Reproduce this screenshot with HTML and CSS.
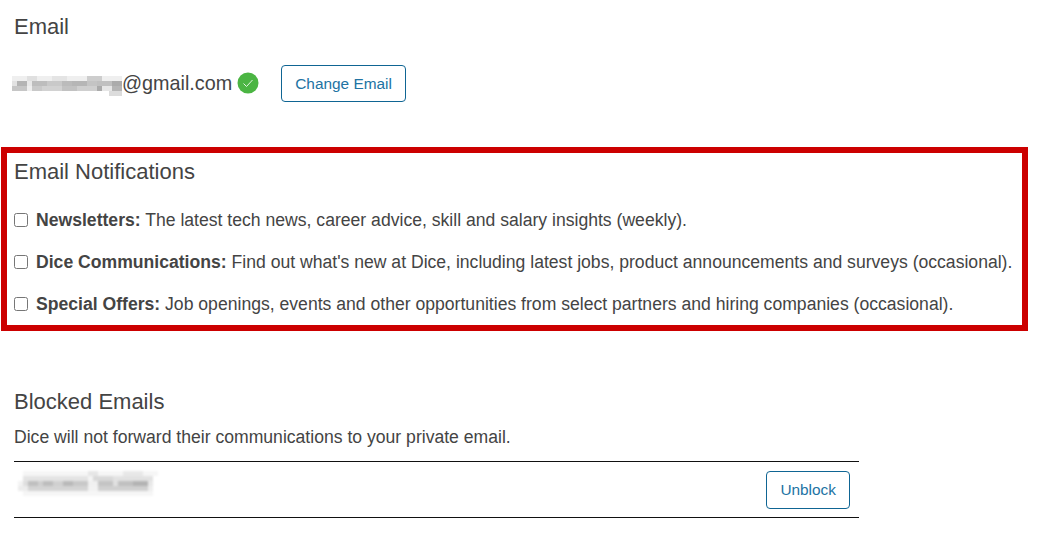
FILE: index.html
```html
<!DOCTYPE html>
<html lang="en">
<head>
    <meta charset="UTF-8">
    <title>Email Settings</title>
    <link rel="stylesheet" href="styles.css">
</head>
<body>

    <section class="email-section">
        <h2>Email</h2>
        <div class="email-row">
            <span class="email-address">
                <svg class="mosaic" width="110" height="22" viewBox="0 0 110 22" shape-rendering="crispEdges" aria-hidden="true">
                    <rect x="0" y="2" width="110" height="5" fill="#efefef"/>
                    <rect x="15" y="2" width="10" height="5" fill="#e0e0e0"/>
                    <rect x="40" y="2" width="15" height="5" fill="#e4e4e4"/>
                    <rect x="75" y="2" width="15" height="5" fill="#cdcdcd"/>
                    <rect x="0" y="7" width="5" height="5" fill="#e2e2e2"/>
                    <rect x="5" y="7" width="10" height="5" fill="#b4b4b4"/>
                    <rect x="15" y="7" width="5" height="5" fill="#e8e8e8"/>
                    <rect x="20" y="7" width="15" height="5" fill="#bdbdbd"/>
                    <rect x="35" y="7" width="15" height="5" fill="#c9c9c9"/>
                    <rect x="50" y="7" width="10" height="5" fill="#bbb"/>
                    <rect x="60" y="7" width="15" height="5" fill="#b6b6b6"/>
                    <rect x="75" y="7" width="10" height="5" fill="#c4c4c4"/>
                    <rect x="85" y="7" width="15" height="5" fill="#c0c0c0"/>
                    <rect x="100" y="7" width="10" height="5" fill="#ababab"/>
                    <rect x="0" y="12" width="15" height="5" fill="#c6c6c6"/>
                    <rect x="15" y="12" width="5" height="5" fill="#eee"/>
                    <rect x="20" y="12" width="10" height="5" fill="#c9c9c9"/>
                    <rect x="30" y="12" width="20" height="5" fill="#d2d2d2"/>
                    <rect x="50" y="12" width="15" height="5" fill="#c2c2c2"/>
                    <rect x="65" y="12" width="20" height="5" fill="#cfcfcf"/>
                    <rect x="85" y="12" width="5" height="5" fill="#aaa"/>
                    <rect x="90" y="12" width="10" height="5" fill="#e6e6e6"/>
                    <rect x="100" y="12" width="10" height="5" fill="#b5b5b5"/>
                    <rect x="97" y="17" width="13" height="5" fill="#dcdcdc"/>
                </svg>@gmail.com
            </span>
            <svg class="verified" width="22" height="22" viewBox="0 0 22 22" aria-hidden="true">
                <circle cx="11" cy="11" r="10.5" fill="#4bb543"/>
                <path d="M6.5 11.5l3 3 6-6.5" fill="none" stroke="#e3f5e1" stroke-width="1"/>
            </svg>
            <button class="outline-btn change-btn">Change Email</button>
        </div>
    </section>

    <section class="notifications">
        <h2>Email Notifications</h2>
        <label class="notify-row"><input type="checkbox"> <span><b>Newsletters:</b> The latest tech news, career advice, skill and salary insights (weekly).</span></label>
        <label class="notify-row"><input type="checkbox"> <span><b>Dice Communications:</b> Find out what's new at Dice, including latest jobs, product announcements and surveys (occasional).</span></label>
        <label class="notify-row"><input type="checkbox"> <span><b>Special Offers:</b> Job openings, events and other opportunities from select partners and hiring companies (occasional).</span></label>
    </section>

    <section class="blocked">
        <h2>Blocked Emails</h2>
        <p>Dice will not forward their communications to your private email.</p>
        <div class="blocked-row">
            <svg class="mosaic-name" width="140" height="25" viewBox="0 0 140 25" shape-rendering="crispEdges" aria-hidden="true">
                <rect x="5" y="0" width="135" height="5" fill="#f6f6f6"/>
                <rect x="70" y="0" width="10" height="5" fill="#e6e6e6"/>
                <rect x="105" y="0" width="20" height="5" fill="#e8e8e8"/>
                <rect x="5" y="5" width="65" height="5" fill="#e4e4e4"/>
                <rect x="70" y="5" width="5" height="5" fill="#f4f4f4"/>
                <rect x="75" y="5" width="20" height="5" fill="#d9d9d9"/>
                <rect x="95" y="5" width="40" height="5" fill="#e2e2e2"/>
                <rect x="0" y="10" width="5" height="5" fill="#f3f3f3"/>
                <rect x="5" y="10" width="5" height="5" fill="#dedede"/>
                <rect x="10" y="10" width="10" height="5" fill="#bfbfbf"/>
                <rect x="20" y="10" width="5" height="5" fill="#cfcfcf"/>
                <rect x="25" y="10" width="10" height="5" fill="#bdbdbd"/>
                <rect x="35" y="10" width="10" height="5" fill="#d0d0d0"/>
                <rect x="45" y="10" width="10" height="5" fill="#b9b9b9"/>
                <rect x="55" y="10" width="15" height="5" fill="#c8c8c8"/>
                <rect x="70" y="10" width="10" height="5" fill="#f0f0f0"/>
                <rect x="80" y="10" width="15" height="5" fill="#c4c4c4"/>
                <rect x="95" y="10" width="5" height="5" fill="#e0e0e0"/>
                <rect x="100" y="10" width="15" height="5" fill="#c0c0c0"/>
                <rect x="115" y="10" width="15" height="5" fill="#b3b3b3"/>
                <rect x="130" y="10" width="5" height="5" fill="#e8e8e8"/>
                <rect x="0" y="15" width="10" height="5" fill="#ececec"/>
                <rect x="10" y="15" width="60" height="5" fill="#d4d4d4"/>
                <rect x="70" y="15" width="10" height="5" fill="#f2f2f2"/>
                <rect x="80" y="15" width="50" height="5" fill="#d0d0d0"/>
                <rect x="130" y="15" width="5" height="5" fill="#eee"/>
                <rect x="5" y="20" width="130" height="5" fill="#f6f6f6"/>
            </svg>
            <button class="outline-btn">Unblock</button>
        </div>
    </section>

</body>
</html>
```

FILE: styles.css
```css
body {
    font-family: "Liberation Sans", Arial, sans-serif;
    margin: 0;
    color: #444;
    background-color: #fff;
    font-size: 17.6px;
}
h2 {
    margin: 0;
    font-size: 22px;
    font-weight: 400;
    line-height: 26px;
}
.email-section {
    padding: 14px 14px 0;
    height: 147px;
    box-sizing: border-box;
}
.email-row {
    display: flex;
    align-items: center;
    margin-top: 25px;
}
.email-address {
    display: flex;
    align-items: center;
    font-size: 19.8px;
    margin-left: -2px;
}
.mosaic {
    display: block;
    margin-top: 3px;
}
.verified {
    margin-left: 5px;
    margin-top: -2px;
}
.outline-btn {
    font-family: inherit;
    font-size: 15.4px;
    color: #2273a3;
    background-color: #fff;
    border: 1px solid #0f6593;
    border-radius: 4px;
    padding: 0 13px;
    height: 38px;
}
.change-btn {
    margin-left: 22px;
    height: 37px;
}
.notifications {
    margin-left: 1px;
    width: 1027px;
    height: 184px;
    box-sizing: border-box;
    border: 6px solid #cc0000;
    padding: 6px 7px;
}
.notify-row {
    display: flex;
    align-items: center;
    margin-top: 16px;
    line-height: 26px;
    white-space: nowrap;
}
.notifications h2 + .notify-row {
    margin-top: 22px;
}
.notify-row input {
    width: 14px;
    height: 14px;
    margin: 0 8px 0 0;
}
.blocked {
    padding: 58px 14px 0;
}
.blocked p {
    margin: 12px 0 0;
    line-height: 20px;
}
.blocked-row {
    width: 845px;
    height: 57px;
    box-sizing: border-box;
    margin-top: 14px;
    border-top: 1px solid #111;
    border-bottom: 1px solid #111;
    display: flex;
    justify-content: space-between;
    align-items: center;
    padding-right: 9px;
}
.mosaic-name {
    align-self: flex-start;
    margin-top: 9px;
    margin-left: 4px;
    filter: blur(1px);
}
```
